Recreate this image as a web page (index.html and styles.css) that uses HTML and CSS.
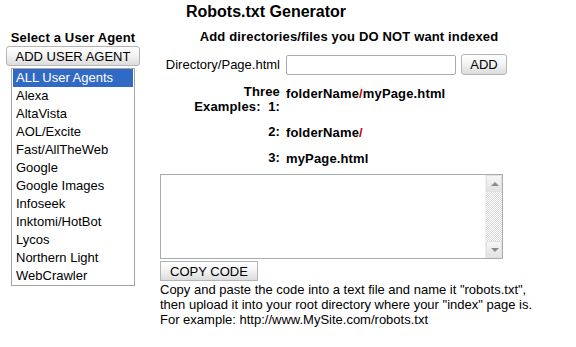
FILE: index.html
```html
<!DOCTYPE html>
<html lang="en">
<head>
    <meta charset="UTF-8">
    <title>Robots.txt Generator</title>
    <link rel="stylesheet" href="styles.css">
</head>
<body>
    <div class="page">
        <h1 class="title">Robots.txt Generator</h1>
        <div class="main">
            <div class="agents">
                <div class="heading">Select a User Agent</div>
                <button class="button add-agent">ADD USER AGENT</button>
                <ul class="agent-list">
                    <li class="selected">ALL User Agents</li>
                    <li>Alexa</li>
                    <li>AltaVista</li>
                    <li>AOL/Excite</li>
                    <li>Fast/AllTheWeb</li>
                    <li>Google</li>
                    <li>Google Images</li>
                    <li>Infoseek</li>
                    <li>Inktomi/HotBot</li>
                    <li>Lycos</li>
                    <li>Northern Light</li>
                    <li>WebCrawler</li>
                </ul>
            </div>
            <div class="generator">
                <div class="heading center">Add directories/files you DO NOT want indexed</div>
                <div class="form-grid">
                    <div class="label">Directory/Page.html</div>
                    <div class="field">
                        <input type="text" class="path-input">
                        <button class="button add">ADD</button>
                    </div>
                    <div class="label bold">Three<br>Examples:&nbsp; 1:</div>
                    <div class="example">folderName<span class="slash">/</span>myPage.html</div>
                    <div class="label bold">2:</div>
                    <div class="example">folderName<span class="slash">/</span></div>
                    <div class="label bold">3:</div>
                    <div class="example">myPage.html</div>
                </div>
                <div class="code-box">
                    <div class="code-area"></div>
                    <div class="scrollbar">
                        <div class="arrow up"></div>
                        <div class="track"></div>
                        <div class="arrow down"></div>
                    </div>
                </div>
                <button class="button copy">COPY CODE</button>
                <p class="note">Copy and paste the code into a text file and name it "robots.txt",<br>
                then upload it into your root directory where your "index" page is.<br>
                For example: http://www.MySite.com/robots.txt</p>
            </div>
        </div>
    </div>
</body>
</html>
```
FILE: styles.css
```css
*{
    margin: 0;
    padding: 0;
    box-sizing: border-box;
    font-family: 'Liberation Sans', Arial, sans-serif;
}
body{
    background: #fff;
    color: #000;
}
.page{
    padding: 3px 0 0 6px;
}
.title{
    width: 520px;
    text-align: center;
    font-size: 16px;
    line-height: 18px;
    font-weight: bold;
}
.main{
    display: flex;
    gap: 20px;
    margin-top: 9px;
}
.agents{
    width: 134px;
    display: flex;
    flex-direction: column;
    align-items: center;
}
.heading{
    font-size: 13px;
    line-height: 15px;
    font-weight: bold;
    letter-spacing: 0.15px;
}
.center{
    text-align: center;
}
.button{
    font-size: 13px;
    color: #000;
    background: linear-gradient(#ffffff, #f4f4f4 45%, #dcdcdc);
    border: 1px solid #b5b5b5;
    border-radius: 3px;
    height: 20px;
    line-height: 17px;
    cursor: pointer;
}
.add-agent{
    width: 134px;
    margin-top: 1px;
}
.agent-list{
    list-style: none;
    width: 124px;
    margin-top: 2px;
    border: 1px solid #a5a5a5;
    padding: 0 1px;
}
.agent-list li{
    font-size: 13px;
    height: 18px;
    line-height: 18px;
    padding-left: 3px;
}
.agent-list .selected{
    background: #316ac5;
    color: #fff;
}
.generator{
    width: 378px;
    margin-top: -1px;
}
.form-grid{
    display: grid;
    grid-template-columns: 120px auto;
    column-gap: 6px;
    row-gap: 9px;
    margin-top: 10px;
    font-size: 13px;
    line-height: 15px;
}
.label{
    text-align: right;
    align-self: center;
}
.bold{
    font-weight: bold;
    letter-spacing: 0.15px;
}
.field{
    display: flex;
    gap: 5px;
    align-items: center;
}
.path-input{
    width: 170px;
    height: 20px;
    border: 1px solid #a5acb2;
    border-radius: 2px;
}
.add{
    width: 46px;
    height: 21px;
}
.example{
    font-weight: bold;
    letter-spacing: 0.15px;
    padding-top: 2px;
}
.slash{
    color: #c00;
}
.code-box{
    display: flex;
    width: 343px;
    height: 85px;
    margin-top: 8px;
    border: 1px solid #a5acb2;
}
.code-area{
    flex: 1;
}
.scrollbar{
    width: 17px;
    display: flex;
    flex-direction: column;
    border-left: 1px solid #eee;
}
.track{
    flex: 1;
    background: repeating-conic-gradient(#d8d8d8 0 25%, #fff 0 50%) 0 0 / 2px 2px;
}
.arrow{
    height: 17px;
    background: linear-gradient(#f6f6f6, #e2e2e2);
    border: 1px solid #e0e0e0;
    position: relative;
}
.arrow::after{
    content: "";
    position: absolute;
    left: 4px;
    top: 6px;
    border-left: 4px solid transparent;
    border-right: 4px solid transparent;
}
.up::after{
    border-bottom: 4px solid #8a8a8a;
}
.down::after{
    border-top: 4px solid #8a8a8a;
}
.copy{
    width: 98px;
    margin-top: 2px;
    display: block;
    border-radius: 0;
}
.note{
    font-size: 13px;
    line-height: 15px;
    margin-top: 1px;
}
```
